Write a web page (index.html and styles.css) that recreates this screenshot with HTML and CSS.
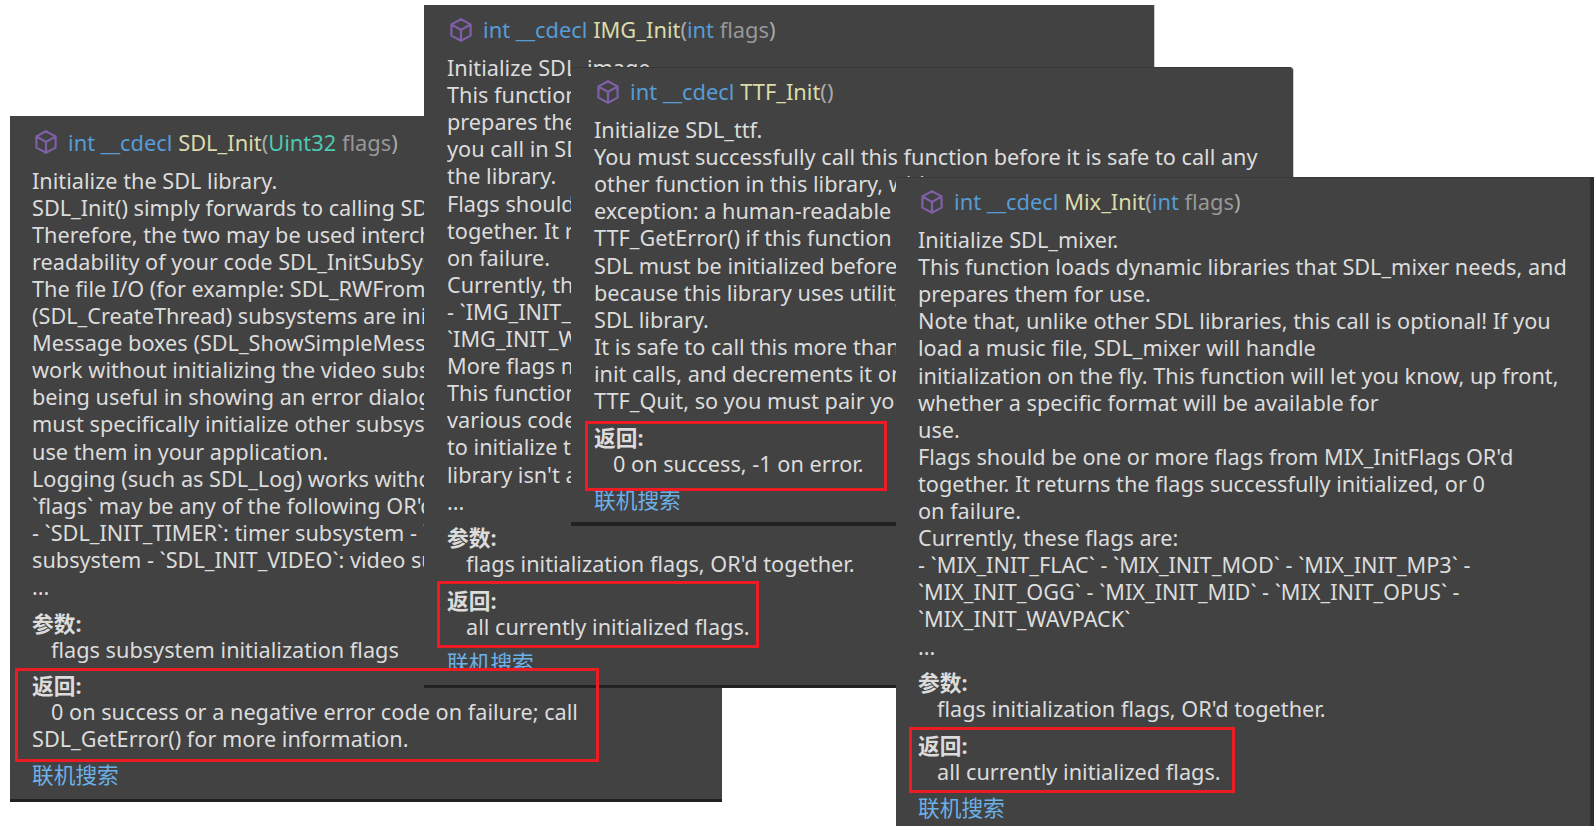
FILE: index.html
```html
<!DOCTYPE html>
<html lang="en">
<head>
<meta charset="utf-8">
<title>SDL init tooltips</title>
<link rel="stylesheet" href="styles.css">
</head>
<body>
<svg class="defs" width="0" height="0" aria-hidden="true"><defs>
<symbol id="cube" viewBox="0 0 22 24"><path d="M11 1.2 20.6 6.4V17.6L11 22.8 1.4 17.6V6.4ZM1.8 6.6 11 12 20.2 6.6M11 12V22.6" fill="none" stroke="currentColor" stroke-width="2.2" stroke-linejoin="round"/></symbol>
</defs></svg>
<main class="desk">

<section class="win win-sdl">
<h2 class="sig"><svg class="cube"><use href="#cube"/></svg><span><i class="kw">int __cdecl</i> <i class="fn">SDL_Init</i>(<i class="ty">Uint32</i> <i class="pm">flags</i>)</span></h2>
<p class="doc">Initialize the SDL library.<br>
SDL_Init() simply forwards to calling SDL_InitSubSystem().<br>
Therefore, the two may be used interchangeably. Though for<br>
readability of your code SDL_InitSubSystem() might be preferred.<br>
The file I/O (for example: SDL_RWFromFile) and threading<br>
(SDL_CreateThread) subsystems are initialized by default.<br>
Message boxes (SDL_ShowSimpleMessageBox) also attempt to<br>
work without initializing the video subsystem, in hopes of<br>
being useful in showing an error dialog when SDL_Init fails. You<br>
must specifically initialize other subsystems if you<br>
use them in your application.<br>
Logging (such as SDL_Log) works without initialization, too.<br>
`flags` may be any of the following OR'd together:<br>
- `SDL_INIT_TIMER`: timer subsystem - `SDL_INIT_AUDIO`: audio<br>
subsystem - `SDL_INIT_VIDEO`: video subsystem; automatically<br>
...</p>
<h3 class="label">参数:</h3>
<p class="val">flags subsystem initialization flags</p>
<h3 class="label">返回:</h3>
<p class="val">0 on success or a negative error code on failure; call<br>SDL_GetError() for more information.</p>
<a class="link">联机搜索</a>
</section>

<section class="win win-img">
<h2 class="sig"><svg class="cube"><use href="#cube"/></svg><span><i class="kw">int __cdecl</i> <i class="fn">IMG_Init</i>(<i class="kw">int</i> <i class="pm">flags</i>)</span></h2>
<p class="doc">Initialize SDL_image.<br>
This function loads dynamic libraries that SDL_image needs, and<br>
prepares them for use. This must be the first function<br>
you call in SDL_image, and you must call IMG_Quit to clean up<br>
the library.<br>
Flags should be one or more flags from IMG_InitFlags OR'd<br>
together. It returns the flags successfully initialized, or 0<br>
on failure.<br>
Currently, these flags are:<br>
- `IMG_INIT_JPG` - `IMG_INIT_PNG` - `IMG_INIT_TIF` -<br>
`IMG_INIT_WEBP` - `IMG_INIT_JXL` - `IMG_INIT_AVIF`<br>
More flags may be added in a future SDL_image release.<br>
This function may need to load external shared libraries to<br>
various codecs, which means this function can fail<br>
to initialize that support on an otherwise-reasonable system if the<br>
library isn't available.<br>
...</p>
<h3 class="label">参数:</h3>
<p class="val">flags initialization flags, OR'd together.</p>
<h3 class="label">返回:</h3>
<p class="val">all currently initialized flags.</p>
<a class="link link-cut">联机搜索</a>
</section>

<section class="win win-ttf">
<h2 class="sig"><svg class="cube"><use href="#cube"/></svg><span><i class="kw">int __cdecl</i> <i class="fn">TTF_Init</i>()</span></h2>
<p class="doc">Initialize SDL_ttf.<br>
You must successfully call this function before it is safe to call any<br>
other function in this library, with one<br>
exception: a human-readable error message can be retrieved from<br>
TTF_GetError() if this function fails.<br>
SDL must be initialized before this call,<br>
because this library uses utility functions from the<br>
SDL library.<br>
It is safe to call this more than once; the library keeps a counter of<br>
init calls, and decrements it on each call to<br>
TTF_Quit, so you must pair your init and quit calls.</p>
<h3 class="label">返回:</h3>
<p class="val">0 on success, -1 on error.</p>
<a class="link">联机搜索</a>
</section>

<section class="win win-mix">
<h2 class="sig"><svg class="cube"><use href="#cube"/></svg><span><i class="kw">int __cdecl</i> <i class="fn">Mix_Init</i>(<i class="kw">int</i> <i class="pm">flags</i>)</span></h2>
<p class="doc">Initialize SDL_mixer.<br>
This function loads dynamic libraries that SDL_mixer needs, and<br>
prepares them for use.<br>
Note that, unlike other SDL libraries, this call is optional! If you<br>
load a music file, SDL_mixer will handle<br>
initialization on the fly. This function will let you know, up front,<br>
whether a specific format will be available for<br>
use.<br>
Flags should be one or more flags from MIX_InitFlags OR'd<br>
together. It returns the flags successfully initialized, or 0<br>
on failure.<br>
Currently, these flags are:<br>
- `MIX_INIT_FLAC` - `MIX_INIT_MOD` - `MIX_INIT_MP3` -<br>
`MIX_INIT_OGG` - `MIX_INIT_MID` - `MIX_INIT_OPUS` -<br>
`MIX_INIT_WAVPACK`<br>
...</p>
<h3 class="label">参数:</h3>
<p class="val">flags initialization flags, OR'd together.</p>
<h3 class="label">返回:</h3>
<p class="val">all currently initialized flags.</p>
<a class="link">联机搜索</a>
</section>

<div class="mark mark-sdl"></div>
<div class="mark mark-img"></div>
<div class="mark mark-ttf"></div>
<div class="mark mark-mix"></div>
</main>
</body>
</html>
```
FILE: styles.css
```css
* { box-sizing: border-box; margin: 0; padding: 0; }
html, body { background: #fff; }
body { width: 1594px; height: 826px; overflow: hidden; }
.defs { position: absolute; }
.desk { position: relative; width: 1594px; height: 826px; overflow: hidden; }

.win {
  position: absolute;
  display: flex;
  flex-direction: column;
  align-items: flex-start;
  overflow: hidden;
  padding: 11px 0 0 22px;
  background: #424242;
  color: #dcdcdc;
  font-family: "Noto Sans", "Noto Sans CJK SC", sans-serif;
  font-size: 21.7px;
  line-height: 27.1px;
  white-space: nowrap;
  border-bottom: 3px solid #222;
}
.win-sdl { left: 10px; top: 116px; width: 712px; height: 686px; z-index: 1; padding-top: 12.5px; }
.win-img { left: 424px; top: 5px; width: 730px; height: 683px; z-index: 2; padding-left: 23px; box-shadow: 1px 0 0 #ccc; }
.win-ttf { left: 571px; top: 67px; width: 722px; height: 459px; z-index: 3; padding-top: 10px; padding-left: 23px; border-top-right-radius: 4px; border-top: 1px solid #383838; border-bottom-width: 4px; box-shadow: 1px 0 0 #ccc; }
.win-mix { left: 896px; top: 177px; width: 698px; height: 660px; z-index: 4; padding-top: 10px; border-top: 1px solid #383838; border-right: 4px solid #2e2e2e; }

.sig { display: flex; align-items: center; gap: 11px; padding-left: 3px; margin-bottom: 11px; font: inherit; font-size: 21.85px; color: #aaa; }
.sig i { font-style: normal; }
.cube { width: 22px; height: 24px; color: #7e5fa8; flex: none; }
.kw { color: #569cd6; }
.fn { color: #dcdcaa; }
.ty { color: #4ec9b0; }
.pm { color: #989898; }

.label { margin-top: 9.5px; height: 26px; font: inherit; line-height: 28px; font-weight: 700; }
.val { text-indent: 19px; }
.link { margin-top: 9px; color: #6cb0e8; }
.link-cut { height: 22px; overflow: hidden; }

.mark { position: absolute; z-index: 5; border: 3px solid #ed1c24; }
.mark-sdl { left: 15px; top: 668px; width: 584px; height: 94px; }
.mark-img { left: 437px; top: 581px; width: 322px; height: 67px; }
.mark-ttf { left: 585px; top: 421px; width: 302px; height: 70px; }
.mark-mix { left: 909px; top: 727px; width: 326px; height: 66px; }
```
